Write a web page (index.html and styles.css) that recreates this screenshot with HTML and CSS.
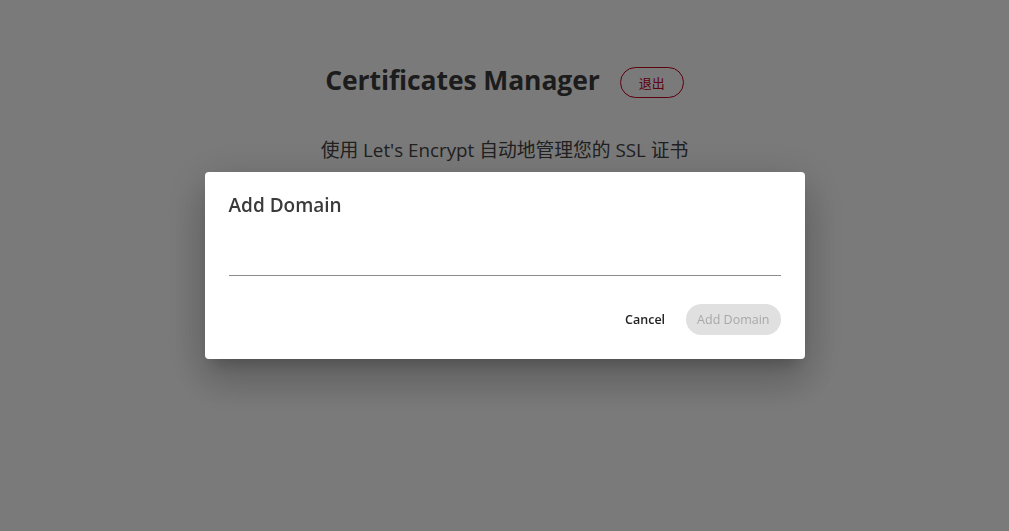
FILE: index.html
```html
<!DOCTYPE html>
<html>
<head>
<meta charset="utf-8">
<link rel="stylesheet" href="styles.css">
</head>
<body>
<div class="page">
  <div class="header">
    <h1 class="title">Certificates Manager</h1>
    <button class="logout">退出</button>
  </div>
  <p class="subtitle">使用 Let's Encrypt 自动地管理您的 SSL 证书</p>
</div>
<div class="overlay">
  <div class="dialog">
    <h2 class="dialog-title">Add Domain</h2>
    <div class="field"><input class="input" type="text"></div>
    <div class="actions">
      <button class="btn-text">Cancel</button>
      <button class="btn-disabled">Add Domain</button>
    </div>
  </div>
</div>
</body>
</html>
```
FILE: styles.css
```css
* { box-sizing: border-box; }
html, body { margin: 0; height: 100%; }
body {
  font-family: "Open Sans", "Noto Sans CJK SC", sans-serif;
  background: #ffffff;
  color: #333;
  overflow: hidden;
}
.page {
  display: flex;
  flex-direction: column;
  align-items: center;
  padding-top: 62px;
}
.header {
  display: flex;
  align-items: center;
  gap: 20px;
}
.title {
  margin: 0;
  font-size: 26.5px;
  font-weight: 700;
  color: #3c3c3c;
  letter-spacing: -0.1px;
}
.logout {
  width: 64px;
  height: 31px;
  margin-top: 4px;
  border: 1px solid #c0001e;
  border-radius: 16px;
  background: transparent;
  color: #c0001e;
  font-family: "Noto Sans CJK SC", sans-serif;
  font-size: 13px;
}
.subtitle {
  margin: 37px 0 0 0;
  font-size: 18.8px;
  color: #444;
  font-family: "Open Sans", "Noto Sans CJK SC", sans-serif;
}
.overlay {
  position: fixed;
  inset: 0;
  background: rgba(0, 0, 0, 0.52);
  display: flex;
  justify-content: center;
  align-items: flex-start;
  padding-top: 172px;
}
.dialog {
  width: 600px;
  height: 187px;
  background: #fff;
  border-radius: 4px;
  box-shadow: 0 11px 15px -7px rgba(0,0,0,.2), 0 24px 38px 3px rgba(0,0,0,.14), 0 9px 46px 8px rgba(0,0,0,.12);
  padding: 20px 24px 24px;
  display: flex;
  flex-direction: column;
}
.dialog-title {
  margin: 0;
  font-size: 19px;
  font-weight: 600;
  color: #3a3a3a;
  line-height: 26px;
}
.field {
  margin-top: 21px;
}
.input {
  width: 100%;
  height: 37px;
  border: none;
  border-bottom: 1px solid #8c8c8c;
  outline: none;
  font-size: 15px;
}
.actions {
  margin-top: 28px;
  display: flex;
  justify-content: flex-end;
  align-items: center;
  gap: 9px;
}
.btn-text {
  border: none;
  background: transparent;
  font-family: "Open Sans", sans-serif;
  font-size: 12.5px;
  font-weight: 600;
  color: #222;
  padding: 0 12px;
  height: 31px;
}
.btn-disabled {
  border: none;
  border-radius: 16px;
  background: #e0e0e0;
  color: #a8a8a8;
  font-family: "Open Sans", sans-serif;
  font-size: 12.5px;
  font-weight: 500;
  height: 31px;
  padding: 0 11px;
}
```
